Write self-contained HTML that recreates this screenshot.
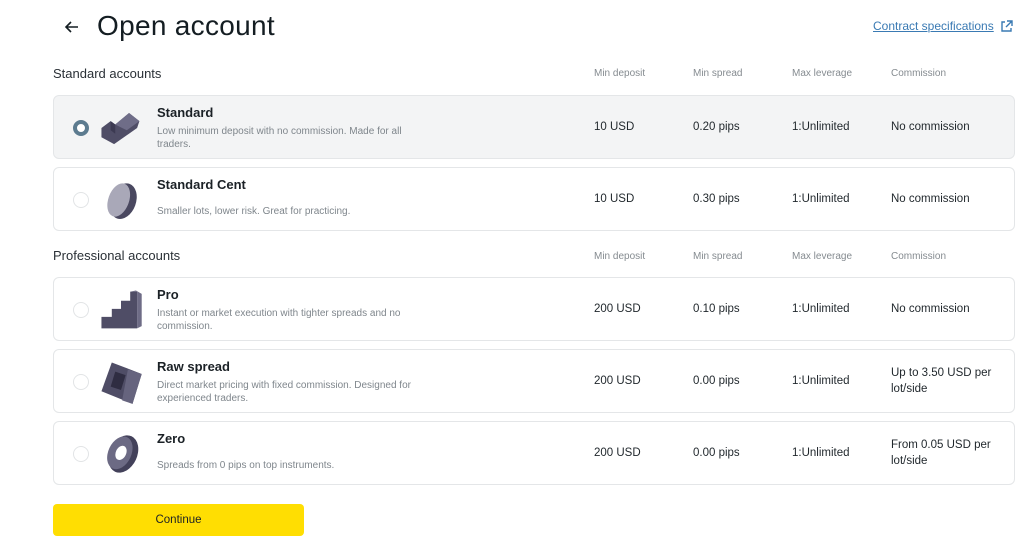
<!DOCTYPE html>
<html><head><meta charset="utf-8"><style>
*{margin:0;padding:0;box-sizing:border-box}
body{width:1024px;height:554px;background:#fff;font-family:"Liberation Sans",sans-serif;color:#141d22;position:relative;overflow:hidden}
.a{position:absolute;white-space:nowrap}
.title{left:97px;top:10px;font-size:28px;letter-spacing:0.3px}
.sec{left:53px;font-size:13px;color:#2a3036}
.hd{font-size:10px;color:#858b90}
.row{position:absolute;left:53px;width:962px;height:64px;border:1px solid #e4e6e8;border-radius:6px;background:#fff}
.row.sel{background:#f3f4f5}
.radio{position:absolute;left:19px;top:24px;width:16px;height:16px;border-radius:50%;border:1px solid #e2e4e6;background:#fff}
.sel .radio{border:4px solid #5c7b8f;background:#fff}
.ic{position:absolute;left:44px;top:9px;width:46px;height:46px}
.nm{position:absolute;left:103px;top:9px;font-size:13px;font-weight:bold;color:#1b2126}
.ds{position:absolute;left:103px;top:29px;font-size:10px;color:#7f868c;line-height:13px;width:268px;white-space:normal}
.c{position:absolute;font-size:11.5px;color:#1f262b;line-height:16px}
</style></head><body>
<svg class="a" style="left:64px;top:19px" width="16" height="16" viewBox="0 0 16 16"><path d="M14 8H2M7 3L2 8l5 5" fill="none" stroke="#141d22" stroke-width="1.6"/></svg>
<div class="a title">Open account</div>
<div class="a" style="left:873px;top:19px;font-size:12px;color:#3a7ab3;text-decoration:underline">Contract specifications</div>
<svg class="a" style="left:1000px;top:20px" width="13" height="13" viewBox="0 0 13 13"><path d="M5 2H2v9h9V8M7 1h5v5M12 1L6 7" fill="none" stroke="#3a7ab3" stroke-width="1.4"/></svg>

<div class="a sec" style="top:66px">Standard accounts</div>
<div class="a hd" style="left:594px;top:68px">Min deposit</div><div class="a hd" style="left:693px;top:68px">Min spread</div><div class="a hd" style="left:792px;top:68px">Max leverage</div><div class="a hd" style="left:891px;top:68px">Commission</div>

<div class="row sel" style="top:95px"><div class="radio"></div>
<svg class="ic" viewBox="0 0 40 40"><path d="M3 20l8-6 4 3 12-10 9 7-2 6-20 14-11-6z" fill="#4f4d66"/><path d="M15 17l12-10 9 7-11 8z" fill="#6f6d88"/><path d="M11 14l4 3v8l-4-3z" fill="#3c3a52"/></svg>
<div class="nm">Standard</div><div class="ds">Low minimum deposit with no commission. Made for all traders.</div>
<div class="c" style="left:540px;top:23px">10 USD</div><div class="c" style="left:639px;top:23px">0.20 pips</div><div class="c" style="left:738px;top:23px">1:Unlimited</div><div class="c" style="left:837px;top:23px">No commission</div></div>

<div class="row" style="top:167px"><div class="radio"></div>
<svg class="ic" viewBox="0 0 40 40"><ellipse cx="22" cy="21" rx="11" ry="16" transform="rotate(20 22 21)" fill="#4a4860"/><ellipse cx="18" cy="20" rx="9" ry="15" transform="rotate(20 18 20)" fill="#a9a8b8"/></svg>
<div class="nm">Standard Cent</div><div class="ds" style="top:37px">Smaller lots, lower risk. Great for practicing.</div>
<div class="c" style="left:540px;top:23px">10 USD</div><div class="c" style="left:639px;top:23px">0.30 pips</div><div class="c" style="left:738px;top:23px">1:Unlimited</div><div class="c" style="left:837px;top:23px">No commission</div></div>

<div class="a sec" style="top:248px">Professional accounts</div>
<div class="a hd" style="left:594px;top:251px">Min deposit</div><div class="a hd" style="left:693px;top:251px">Min spread</div><div class="a hd" style="left:792px;top:251px">Max leverage</div><div class="a hd" style="left:891px;top:251px">Commission</div>

<div class="row" style="top:277px"><div class="radio"></div>
<svg class="ic" viewBox="0 0 40 40"><path d="M3 26h9v-7h8v-7h8V4h6v32H3z" fill="#4f4d66"/><path d="M28 4l5-1 5 3v28l-4 2V4z" fill="#6e6c86"/></svg>
<div class="nm">Pro</div><div class="ds">Instant or market execution with tighter spreads and no commission.</div>
<div class="c" style="left:540px;top:23px">200 USD</div><div class="c" style="left:639px;top:23px">0.10 pips</div><div class="c" style="left:738px;top:23px">1:Unlimited</div><div class="c" style="left:837px;top:23px">No commission</div></div>

<div class="row" style="top:349px"><div class="radio"></div>
<svg class="ic" viewBox="0 0 40 40"><path d="M12 3l26 10-8 26L3 28z" fill="#4f4d66"/><path d="M15 11l9 3-4 13-9-3z" fill="#2f2d42"/><path d="M26 9l12 4-8 26-9-3z" fill="#66647e"/></svg>
<div class="nm">Raw spread</div><div class="ds">Direct market pricing with fixed commission. Designed for experienced traders.</div>
<div class="c" style="left:540px;top:23px">200 USD</div><div class="c" style="left:639px;top:23px">0.00 pips</div><div class="c" style="left:738px;top:23px">1:Unlimited</div><div class="c" style="left:837px;top:15px">Up to 3.50 USD per<br>lot/side</div></div>

<div class="row" style="top:421px"><div class="radio"></div>
<svg class="ic" viewBox="0 0 40 40"><ellipse cx="22" cy="20" rx="12" ry="17" transform="rotate(25 22 20)" fill="#43415a"/><ellipse cx="19" cy="19" rx="10" ry="15" transform="rotate(25 19 19)" fill="#6c6a84"/><ellipse cx="20" cy="19" rx="4.5" ry="6.5" transform="rotate(25 20 19)" fill="#fff"/></svg>
<div class="nm">Zero</div><div class="ds" style="top:37px">Spreads from 0 pips on top instruments.</div>
<div class="c" style="left:540px;top:23px">200 USD</div><div class="c" style="left:639px;top:23px">0.00 pips</div><div class="c" style="left:738px;top:23px">1:Unlimited</div><div class="c" style="left:837px;top:15px">From 0.05 USD per<br>lot/side</div></div>

<div class="a" style="left:53px;top:504px;width:251px;height:32px;background:#ffde02;border-radius:4px;font-size:11.5px;text-align:center;line-height:32px;color:#1b2126">Continue</div>
</body></html>
